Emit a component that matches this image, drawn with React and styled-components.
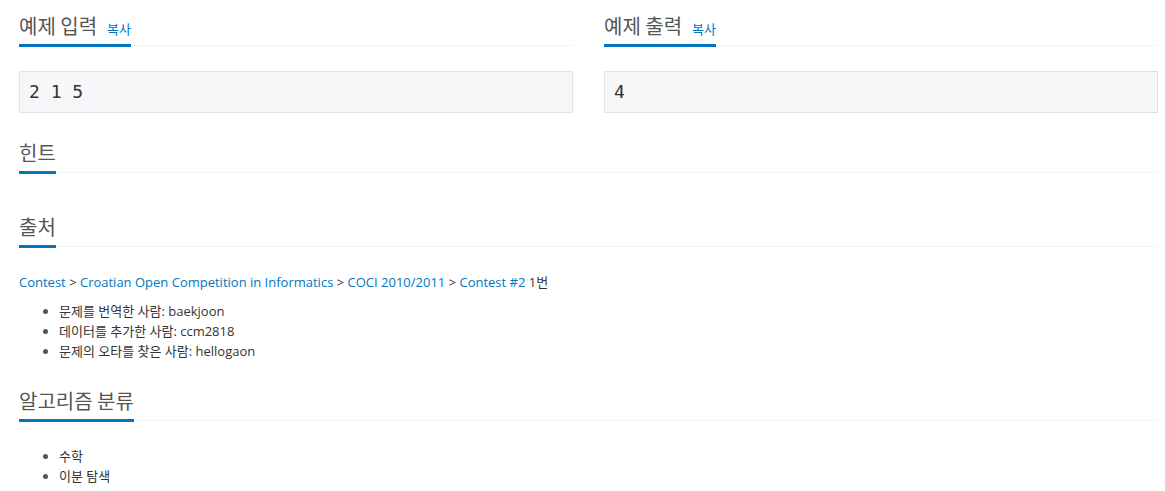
import React from "react";
import styled, { createGlobalStyle } from "styled-components";

const GlobalStyle = createGlobalStyle`
    body {
        margin: 0;
        background: #fff;
        color: #333;
        font-family: "Open Sans", "Noto Sans CJK KR", sans-serif;
        font-size: 13px;
        line-height: 20px;
    }
`;

const Page = styled.div`
    padding: 13px 7px 0 19px;
`;

const SampleRow = styled.div`
    display: grid;
    grid-template-columns: 1fr 1fr;
    column-gap: 31px;
    padding-bottom: 27px;
`;

const Section = styled.section`
    padding-bottom: 27px;
`;

const Headline = styled.div`
    border-bottom: 1px dotted #e4e9f0;
    margin-bottom: ${({ $empty }) => ($empty ? "14px" : "25px")};
`;

Headline.Title = styled.h2`
    display: inline-block;
    margin: 0 0 -2px 0;
    padding-bottom: 5px;
    border-bottom: 3px solid #0076c0;
    color: #555;
    font-family: "Noto Sans CJK KR", sans-serif;
    font-size: 20px;
    font-weight: normal;
    line-height: 26px;
`;

const CopyLink = styled.a`
    margin-left: 10px;
    color: #0076c0;
    font-size: 13px;
    line-height: 1;
    text-decoration: none;
    cursor: pointer;
`;

const SampleData = styled.pre`
    margin: 0;
    padding: 7px 9px;
    background: #f7f7f9;
    border: 1px solid #e1e1e8;
    color: #333;
    font-family: "DejaVu Sans Mono", monospace;
    font-size: 18px;
    line-height: 26px;
`;

const Source = styled.p`
    margin: 0 0 9px 0;
`;

const Link = styled.a`
    color: #0076c0;
    text-decoration: none;
`;

const List = styled.ul`
    margin: 0;
    padding-left: 40px;

    li::marker {
        color: #555;
    }
`;

const SampleSection = ({ title, data }) => (
    <section>
        <Headline>
            <Headline.Title>
                {title}
                <CopyLink>복사</CopyLink>
            </Headline.Title>
        </Headline>
        <SampleData>{data}</SampleData>
    </section>
);

const contributors = [
    "문제를 번역한 사람: baekjoon",
    "데이터를 추가한 사람: ccm2818",
    "문제의 오타를 찾은 사람: hellogaon"
];

const tags = ["수학", "이분 탐색"];

const App = () => (
    <Page>
        <GlobalStyle />
        <SampleRow>
            <SampleSection title="예제 입력" data="2 1 5" />
            <SampleSection title="예제 출력" data="4" />
        </SampleRow>

        <Section>
            <Headline $empty>
                <Headline.Title>힌트</Headline.Title>
            </Headline>
        </Section>

        <Section>
            <Headline>
                <Headline.Title>출처</Headline.Title>
            </Headline>
            <Source>
                <Link>Contest</Link> &gt; <Link>Croatian Open Competition in Informatics</Link> &gt;{" "}
                <Link>COCI 2010/2011</Link> &gt; <Link>Contest #2</Link> 1번
            </Source>
            <List>
                {contributors.map(text => (
                    <li key={text}>{text}</li>
                ))}
            </List>
        </Section>

        <Section>
            <Headline>
                <Headline.Title>알고리즘 분류</Headline.Title>
            </Headline>
            <List>
                {tags.map(tag => (
                    <li key={tag}>{tag}</li>
                ))}
            </List>
        </Section>
    </Page>
);

export default App;
